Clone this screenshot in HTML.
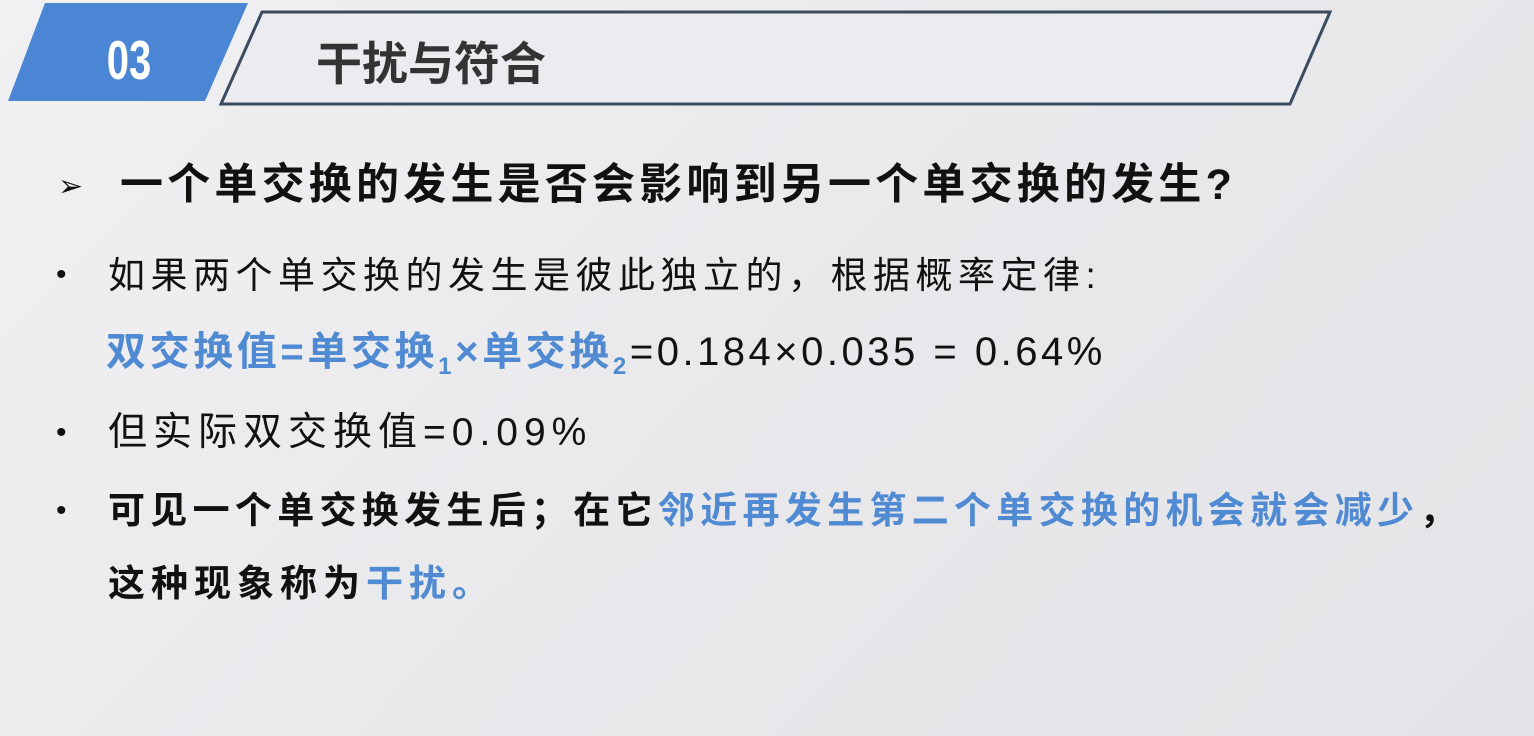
<!DOCTYPE html>
<html><head><meta charset="utf-8"><style>
html,body{margin:0;padding:0}
body{width:1534px;height:736px;overflow:hidden;background:linear-gradient(135deg,#f1f1f3 0%,#e9e9ec 50%,#e4e4e8 100%);position:relative;font-family:"Liberation Sans","Noto Sans CJK SC",sans-serif;color:#111}
.t{position:absolute;white-space:nowrap;line-height:1}
.b{font-weight:bold}
.blue{color:#4f8ad2}
.dot{position:absolute;left:56px;font-size:30px}
</style></head><body>
<svg width="1534" height="736" style="position:absolute;left:0;top:0">
<polygon points="45,3 248,3 205,101 8,101" fill="#4a86d4"/>
<polygon points="262,12 1330,12 1290,104 221,104" fill="#ececf0" stroke="#3b4a5e" stroke-width="3"/>
<text x="0" y="0" font-family="Liberation Sans Narrow,Liberation Sans,sans-serif" font-weight="bold" font-size="50" fill="#fff" text-anchor="middle" transform="translate(129,79) scale(0.8,1.1)">03</text>
<text x="316" y="80" font-family="Liberation Sans,Noto Sans CJK SC,sans-serif" font-weight="bold" font-size="46" fill="#333">干扰与符合</text>
</svg>
<div class="t" style="left:58px;top:172px;font-size:30px">➢</div>
<div class="t b" style="left:120px;top:164px;font-size:43px;letter-spacing:4.2px">一个单交换的发生是否会影响到另一个单交换的发生?</div>
<div class="dot t" style="top:260px">•</div>
<div class="t" style="left:108px;top:257px;font-size:37px;letter-spacing:5.5px">如果两个单交换的发生是彼此独立的，根据概率定律:</div>
<div class="t" style="left:106px;top:332px;font-size:40px"><span class="b blue" style="letter-spacing:3.6px">双交换值=单交换<sub style="font-size:24px">1</sub>×单交换<sub style="font-size:24px">2</sub></span><span style="letter-spacing:3.5px">=0.184×0.035 = 0.64%</span></div>
<div class="dot t" style="top:418px">•</div>
<div class="t" style="left:108px;top:413px;font-size:39px;letter-spacing:6px">但实际双交换值=0.09%</div>
<div class="dot t" style="top:496px">•</div>
<div class="t b" style="left:108px;top:492px;font-size:37px;letter-spacing:5.3px">可见一个单交换发生后；在它<span class="blue">邻近再发生第二个单交换的机会就会减少</span>，</div>
<div class="t b" style="left:108px;top:565px;font-size:37px;letter-spacing:6px">这种现象称为<span class="blue">干扰。</span></div>
</body></html>
